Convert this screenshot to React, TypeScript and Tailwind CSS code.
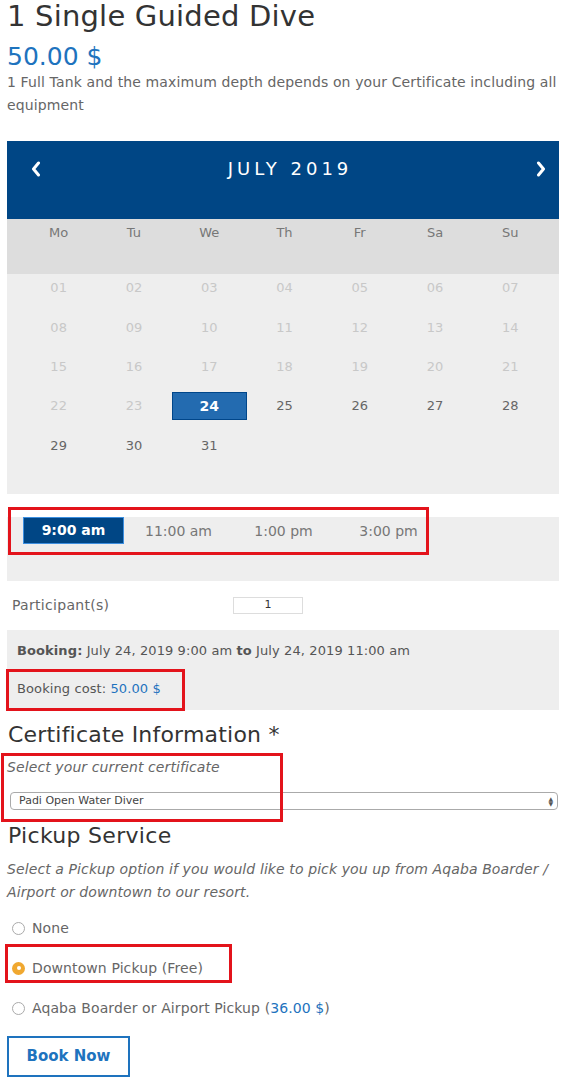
import React from "react";

const prevDays = ["01","02","03","04","05","06","07","08","09","10","11","12","13","14","15","16","17","18","19","20","21","22","23"];

function Radio({ checked }: { checked?: boolean }) {
  if (checked) {
    return (
      <span className="inline-flex w-[13px] h-[13px] rounded-full bg-[#f0a830] items-center justify-center shrink-0">
        <span className="w-[4px] h-[4px] rounded-full bg-white" />
      </span>
    );
  }
  return <span className="inline-block w-[13px] h-[13px] rounded-full border border-[#aaa] bg-white shrink-0" />;
}

function Chevron({ dir }: { dir: "l" | "r" }) {
  return (
    <svg width="10" height="16" viewBox="0 0 10 16" className="block">
      <path
        d={dir === "l" ? "M7.5 2 L2.5 8 L7.5 14" : "M2.5 2 L7.5 8 L2.5 14"}
        fill="none"
        stroke="white"
        strokeWidth="3"
        strokeLinecap="round"
        strokeLinejoin="round"
      />
    </svg>
  );
}

export default function App() {
  const days: { d: string; s: "off" | "on" | "sel" }[] = [];
  prevDays.forEach((d) => days.push({ d, s: "off" }));
  days.push({ d: "24", s: "sel" });
  ["25","26","27","28","29","30","31"].forEach((d) => days.push({ d, s: "on" }));

  return (
    <div className="w-[566px] min-h-[1078px] bg-white text-[#666] font-['DejaVu_Sans',sans-serif] overflow-hidden">
      <div className="px-[7px]">
        <h1 className="text-[29px] leading-[32px] text-[#333] tracking-[0.2px]">1 Single Guided Dive</h1>
        <div className="mt-[10px] text-[25px] leading-[30px] text-[#1e73be]">50.00 $</div>
        <p className="mt-[-1px] text-[14px] leading-[23px] text-[#666] tracking-[0.12px]">
          1 Full Tank and the maximum depth depends on your Certificate including all equipment
        </p>

        {/* Calendar */}
        <div className="mt-[24px] w-[552px]">
          <div className="h-[78px] bg-[#004685] flex items-start pt-[16px] text-white">
            <div className="w-[58px] h-[24px] flex items-center justify-center">
              <Chevron dir="l" />
            </div>
            <div className="flex-1 text-center text-[18px] leading-[24px] tracking-[4px] pr-[8px]">JULY 2019</div>
            <div className="w-[36px] h-[24px] flex items-center justify-center">
              <Chevron dir="r" />
            </div>
          </div>
          <div className="h-[55px] bg-[#dddddd] pl-[14px] pt-[6px]">
            <div className="grid grid-cols-7 w-[527px] text-[13px] leading-[16px] text-[#777]">
              {["Mo","Tu","We","Th","Fr","Sa","Su"].map((w) => (
                <div key={w} className="text-center">{w}</div>
              ))}
            </div>
          </div>
          <div className="bg-[#eeeeee] pl-[14px] h-[220px]">
            <div className="grid grid-cols-7 w-[527px] gap-y-[11.4px] text-[13px]">
              {days.map((x) => (
                <div
                  key={x.d}
                  className={
                    x.s === "sel"
                      ? "h-[28px] flex items-center justify-center bg-[#236bb0] border border-[#00468a] text-white font-bold text-[14px]"
                      : x.s === "off"
                      ? "h-[28px] flex items-center justify-center text-[#c8c8c8]"
                      : "h-[28px] flex items-center justify-center text-[#666]"
                  }
                >
                  {x.d}
                </div>
              ))}
            </div>
          </div>
        </div>

        {/* Time slots */}
        <div className="relative mt-[23px] w-[552px] h-[64px] bg-[#eeeeee] pl-[14px]">
          <div className="flex">
            {["9:00 am","11:00 am","1:00 pm","3:00 pm"].map((t, i) => (
              <div key={t} className="w-[105px] px-[2px]">
                <div
                  className={
                    i === 0
                      ? "h-[27px] flex items-center justify-center bg-[#004685] border border-[#3d8fe0] text-white font-bold text-[14px]"
                      : "h-[27px] flex items-center justify-center text-[#777] text-[14px] pt-[2px]"
                  }
                >
                  {t}
                </div>
              </div>
            ))}
          </div>
          <div className="absolute left-[1px] top-[-10px] w-[421px] h-[48px] border-[3px] border-[#e3131b]" />
        </div>

        {/* Participants */}
        <div className="h-[49px] flex items-center text-[14px] text-[#666]">
          <div className="w-[226px] pl-[5px] tracking-[0.3px]">Participant(s)</div>
          <div className="w-[70px] h-[17px] border border-[#ddd] flex items-center justify-center text-[11px] text-[#333]">1</div>
        </div>

        {/* Booking */}
        <div className="relative w-[552px] h-[80px] bg-[#eeeeee] pl-[10px] pt-[10px] text-[13px] text-[#555] tracking-[0.1px]">
          <div className="leading-[22px]">
            <span className="font-bold">Booking:</span> July 24, 2019 9:00 am <span className="font-bold">to</span> July 24, 2019 11:00 am
          </div>
          <div className="mt-[16px] leading-[22px]">
            Booking cost: <span className="text-[#1e73be]">50.00 $</span>
          </div>
          <div className="absolute left-[-1px] top-[39px] w-[179px] h-[42px] border-[3px] border-[#e3131b]" />
        </div>

        {/* Certificate */}
        <div className="relative">
          <h2 className="pt-[11px] text-[22px] leading-[28px] text-[#333] pl-[1px] tracking-[0.2px]">Certificate Information *</h2>
          <div className="mt-[8px] italic text-[14px] leading-[20px] text-[#666] tracking-[0.1px]">Select your current certificate</div>
          <div className="mt-[15px] ml-[3px] w-[548px] h-[18px] rounded-[4px] border border-[#aaa] flex items-center justify-between pl-[8px] pr-[4px] text-[11px] text-[#444]">
            <span>Padi Open Water Diver</span>
            <span className="flex flex-col text-[6px] leading-[5px] text-[#555]">
              <span>▲</span>
              <span>▼</span>
            </span>
          </div>
          <div className="absolute left-[-6px] top-[43px] w-[282px] h-[69px] border-[3px] border-[#e3131b]" />
        </div>

        {/* Pickup */}
        <h2 className="mt-[12px] text-[22px] leading-[28px] text-[#333] pl-[1px] tracking-[0.3px]">Pickup Service</h2>
        <p className="mt-[8px] italic text-[14px] leading-[23px] text-[#666] tracking-[0.1px]">
          Select a Pickup option if you would like to pick you up from Aqaba Boarder / Airport or downtown to our resort.
        </p>

        <div className="mt-[4px] flex flex-col text-[14px] text-[#666] tracking-[0.1px]">
          <div className="h-[40px] flex items-center gap-[7px] pl-[5px]">
            <Radio /> <span>None</span>
          </div>
          <div className="relative h-[40px] flex items-center gap-[7px] pl-[5px]">
            <Radio checked /> <span>Downtown Pickup (Free)</span>
            <div className="absolute left-[-2px] top-[-4px] w-[227px] h-[39px] border-[3px] border-[#e3131b]" />
          </div>
          <div className="h-[40px] flex items-center gap-[7px] pl-[5px]">
            <Radio /> <span>Aqaba Boarder or Airport Pickup (<span className="text-[#1e73be]">36.00 $</span>)</span>
          </div>
        </div>

        <button className="mt-[8px] w-[123px] h-[41px] border-2 border-[#1e73be] text-[#1e73be] font-bold text-[15px] bg-white">
          Book Now
        </button>
      </div>
    </div>
  );
}
